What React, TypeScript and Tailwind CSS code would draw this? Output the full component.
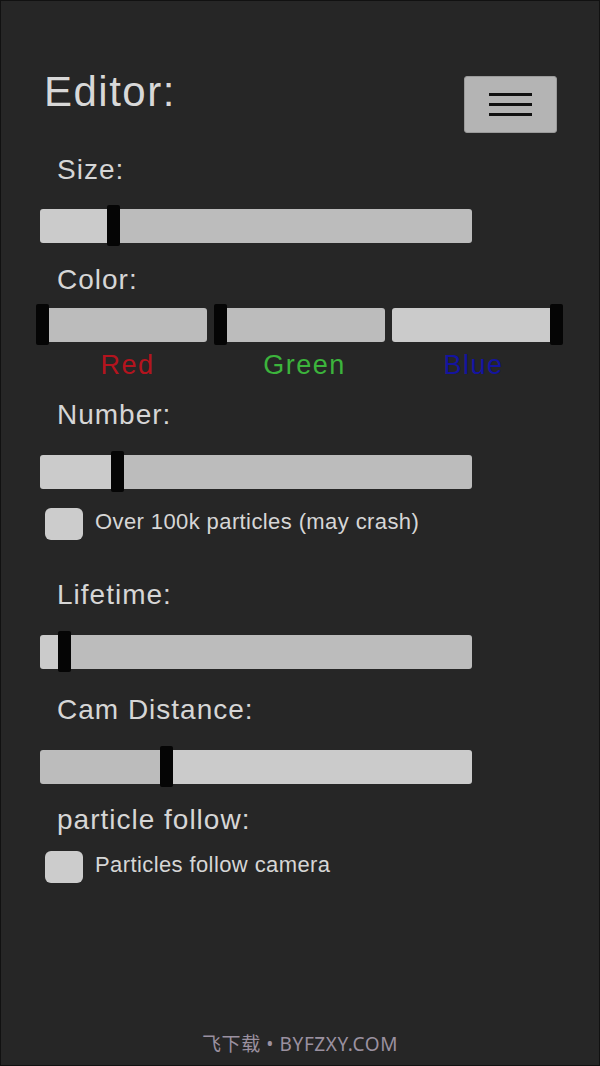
import React from 'react'

const TEXT = 'text-[#d6d6d6]'
const FONT = { fontFamily: '"Liberation Sans", Arial, sans-serif' }

function Label({ children, mt }: { children: React.ReactNode; mt: string }) {
  return (
    <div className={`${mt} ml-[17px] h-[32px] leading-[32px] text-[28px] tracking-[1px] ${TEXT}`}>
      {children}
    </div>
  )
}

// thumb position is the thumb's left edge, in px from the track's left
function Slider({ mt, thumb, reversed = false }: { mt: string; thumb: number; reversed?: boolean }) {
  return (
    <div className={`${mt} relative w-[432px] h-[34px] rounded-[3px] overflow-visible flex`}>
      <div
        className={`h-full rounded-l-[3px] ${reversed ? 'bg-[#bcbcbc]' : 'bg-[#cbcbcb]'}`}
        style={{ width: thumb }}
      />
      <div className={`h-full flex-1 rounded-r-[3px] ${reversed ? 'bg-[#cbcbcb]' : 'bg-[#bcbcbc]'}`} />
      <div className="absolute top-[-4px] w-[13px] h-[41px] bg-[#050505] rounded-[2px]" style={{ left: thumb }} />
    </div>
  )
}

function ColorSlider({ full }: { full: boolean }) {
  return (
    <div className={`relative w-[171px] h-[34px] rounded-[3px] ${full ? 'bg-[#cbcbcb]' : 'bg-[#bcbcbc]'}`}>
      <div
        className={`absolute top-[-4px] w-[13px] h-[41px] bg-[#050505] rounded-[2px] ${full ? 'right-0' : 'left-0'}`}
      />
    </div>
  )
}

function Check({ mt, children }: { mt: string; children: React.ReactNode }) {
  return (
    <div className={`${mt} flex items-center h-[32px] ml-[5px] gap-[12px]`}>
      <div className="w-[38px] h-[32px] rounded-[6px] bg-[#cccccc]" />
      <span className={`mb-[4px] text-[22px] tracking-[0.4px] leading-[28px] ${TEXT}`}>{children}</span>
    </div>
  )
}

export default function App() {
  return (
    <div
      className="w-[600px] h-[1066px] bg-[#262626] border border-[#111] flex flex-col pl-[39px] overflow-hidden"
      style={FONT}
    >
      {/* header */}
      <div className="mt-[70px] flex justify-between items-start pr-[42px]">
        <div className="ml-[4px] h-[42px] leading-[42px] text-[42px] tracking-[1.5px] text-[#d8d8d8]">Editor:</div>
        <div className="mt-[5px] w-[93px] h-[57px] rounded-[3px] bg-[#b4b4b4] border border-[#9a9a9a] flex flex-col items-center justify-center gap-[7.5px]">
          <div className="w-[43px] h-[2.5px] bg-[#111]" />
          <div className="w-[43px] h-[2.5px] bg-[#111]" />
          <div className="w-[43px] h-[2.5px] bg-[#111]" />
        </div>
      </div>

      <Label mt="mt-[21px]">Size:</Label>
      <Slider mt="mt-[23px]" thumb={67} />

      <Label mt="mt-[21px]">Color:</Label>
      <div className="mt-[12px] ml-[-4px] flex gap-[7px]">
        <ColorSlider full={false} />
        <ColorSlider full={false} />
        <ColorSlider full={true} />
      </div>
      <div className="mt-[8px] ml-[-4px] flex gap-[7px] h-[30px] leading-[30px] text-[27px] tracking-[1.5px]">
        <div className="w-[171px] pl-[12px] text-center text-[#b4141e]">Red</div>
        <div className="w-[171px] pl-[10px] text-center text-[#3cb43c]">Green</div>
        <div className="w-[171px] pr-[8px] text-center text-[#1414a0]">Blue</div>
      </div>

      <Label mt="mt-[19px]">Number:</Label>
      <Slider mt="mt-[24px]" thumb={71} />
      <Check mt="mt-[19px]">Over 100k particles (may crash)</Check>

      <Label mt="mt-[39px]">Lifetime:</Label>
      <Slider mt="mt-[24px]" thumb={18} />

      <Label mt="mt-[25px]">Cam Distance:</Label>
      <Slider mt="mt-[24px]" thumb={120} reversed />

      <Label mt="mt-[20px]">particle follow:</Label>
      <Check mt="mt-[15px]">Particles follow camera</Check>

      <div
        className="mt-auto mb-[9px] ml-[-39px] text-center h-[24px] leading-[24px] text-[19px] tracking-[0.6px] text-[#9b91a0]"
        style={{ fontFamily: '"Noto Sans", "Noto Sans CJK SC", sans-serif' }}
      >
        飞下载 • BYFZXY.COM
      </div>
    </div>
  )
}
